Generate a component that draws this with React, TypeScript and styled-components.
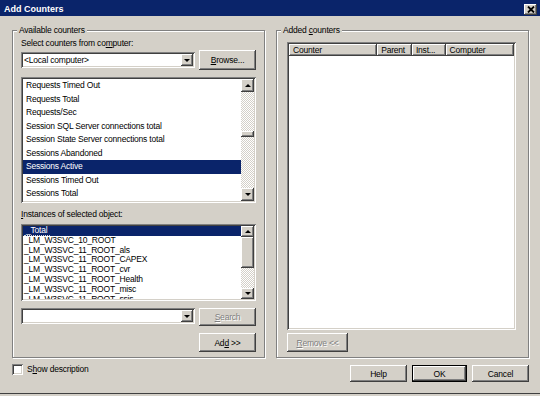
import * as React from 'react';
import styled, { createGlobalStyle, css } from 'styled-components';

const GlobalStyle = createGlobalStyle`
    * { box-sizing: border-box; }
    html, body {
        margin: 0;
        padding: 0;
        background: #d4d0c8;
    }
    body {
        font-family: "Liberation Sans", Arial, sans-serif;
        font-size: 8.5px;
        letter-spacing: -0.2px;
        color: #000;
    }
`;

const raised = css`
    background: #d4d0c8;
    box-shadow: inset -1px -1px 0 #404040, inset 1px 1px 0 #ffffff, inset -2px -2px 0 #808080,
        inset 2px 2px 0 #d4d0c8;
`;

const sunken = css`
    box-shadow: inset 1px 1px 0 #808080, inset -1px -1px 0 #ffffff, inset 2px 2px 0 #404040,
        inset -2px -2px 0 #d4d0c8;
`;

const counters = [
    'Requests Timed Out',
    'Requests Total',
    'Requests/Sec',
    'Session SQL Server connections total',
    'Session State Server connections total',
    'Sessions Abandoned',
    'Sessions Active',
    'Sessions Timed Out',
    'Sessions Total',
];

const instances = [
    '_LM_W3SVC_10_ROOT',
    '_LM_W3SVC_11_ROOT_als',
    '_LM_W3SVC_11_ROOT_CAPEX',
    '_LM_W3SVC_11_ROOT_cvr',
    '_LM_W3SVC_11_ROOT_Health',
    '_LM_W3SVC_11_ROOT_misc',
    '_LM_W3SVC_11_ROOT_ssis',
];

const columns = [
    { name: 'Counter', width: 89 },
    { name: 'Parent', width: 35 },
    { name: 'Inst...', width: 34 },
    { name: 'Computer', width: 69 },
];

const Arrow = ({ dir }: { dir: 'up' | 'down' }) => <Triangle $dir={dir} />;

const ScrollBar = ({ btn, thumbTop, thumbHeight }: { btn: number; thumbTop: number; thumbHeight: number }) => (
    <Scroll>
        <ScrollButton $h={btn}>
            <Arrow dir="up" />
        </ScrollButton>
        <Track>
            <Thumb $top={thumbTop} $h={thumbHeight} />
        </Track>
        <ScrollButton $h={btn}>
            <Arrow dir="down" />
        </ScrollButton>
    </Scroll>
);

const Combo = ({ value }: { value?: string }) => (
    <ComboBox>
        <ComboText>{value}</ComboText>
        <DropButton>
            <Arrow dir="down" />
        </DropButton>
    </ComboBox>
);

export default () => {
    return (
        <>
            <GlobalStyle />
            <Window>
                <TitleBar>
                    <span>Add Counters</span>
                    <CloseButton>
                        <svg width="8" height="7" viewBox="0 0 8 7">
                            <path d="M1 0.5 L7 6.5 M7 0.5 L1 6.5" stroke="#000" strokeWidth="1.8" />
                        </svg>
                    </CloseButton>
                </TitleBar>

                <Body>
                    <Groups>
                        <Group $left={8} $right={8} $top={7}>
                            <Legend>Available counters</Legend>
                            <Label>
                                Select counters from co<U>m</U>puter:
                            </Label>
                            <Row $mt={1} $align="center">
                                <Combo value="<Local computer>" />
                                <Button $w={57} $h={20}>
                                    <span>
                                        <U>B</U>rowse...
                                    </span>
                                </Button>
                            </Row>
                            <ListBox $mt={7} $h={126}>
                                <Items>
                                    {counters.map((c) => (
                                        <CounterRow key={c} $selected={c === 'Sessions Active'}>
                                            {c}
                                        </CounterRow>
                                    ))}
                                </Items>
                                <ScrollBar btn={13} thumbTop={39} thumbHeight={6} />
                            </ListBox>
                            <Label $mt={6}>
                                <U>I</U>nstances of selected object:
                            </Label>
                            <ListBox $mt={4} $h={77}>
                                <Items>
                                    <InstanceRow $selected>
                                        <Focus>_Total</Focus>
                                    </InstanceRow>
                                    {instances.map((i) => (
                                        <InstanceRow key={i}>{i}</InstanceRow>
                                    ))}
                                </Items>
                                <ScrollBar btn={11} thumbTop={0} thumbHeight={31} />
                            </ListBox>
                            <Row $mt={7} $align="flex-start">
                                <Combo />
                                <Button $w={57} $h={18} $disabled>
                                    <span>
                                        <U>S</U>earch
                                    </span>
                                </Button>
                            </Row>
                            <Row $mt={7} $align="flex-start" $end>
                                <Button $w={57} $h={19}>
                                    <span>
                                        Ad<U>d</U> &gt;&gt;
                                    </span>
                                </Button>
                            </Row>
                        </Group>

                        <Group $left={10} $right={12} $top={11}>
                            <Legend>
                                Added <U>c</U>ounters
                            </Legend>
                            <ListView>
                                <Header>
                                    {columns.map((c) => (
                                        <HeaderCell key={c.name} $w={c.width}>
                                            {c.name}
                                        </HeaderCell>
                                    ))}
                                    <HeaderFiller />
                                </Header>
                            </ListView>
                            <Row $mt={3} $align="flex-start">
                                <Button $w={61} $h={19} $disabled>
                                    <span>
                                        <U>R</U>emove &lt;&lt;
                                    </span>
                                </Button>
                            </Row>
                        </Group>
                    </Groups>

                    <Footer>
                        <CheckLabel>
                            <CheckBox />
                            <span>
                                S<U>h</U>ow description
                            </span>
                        </CheckLabel>
                        <FooterButtons>
                            <Button $w={57} $h={17}>
                                Help
                            </Button>
                            <Button $w={55} $h={17} $default>
                                OK
                            </Button>
                            <Button $w={57} $h={17}>
                                Cancel
                            </Button>
                        </FooterButtons>
                    </Footer>
                </Body>
            </Window>
        </>
    );
};

const Window = styled.div`
    width: 540px;
    height: 394px;
    display: flex;
    flex-direction: column;
    border-bottom: 1px solid #404040;
`;

const TitleBar = styled.div`
    height: 16px;
    background: #0a246a;
    color: #fff;
    display: flex;
    justify-content: space-between;
    align-items: center;
    padding: 1px 4px 0 4px;
    font: bold 9px "Liberation Sans", Arial, sans-serif;
    letter-spacing: 0;
`;

const CloseButton = styled.div`
    ${raised};
    width: 13px;
    height: 11px;
    display: flex;
    align-items: center;
    justify-content: center;
    margin-right: -1px;
    align-self: flex-end;
    margin-bottom: 1px;
`;

const Body = styled.div`
    flex: 1;
    display: flex;
    flex-direction: column;
    padding: 14px 11px 0 12px;
`;

const Groups = styled.div`
    display: flex;
    justify-content: space-between;
`;

const Group = styled.div<{ $left: number; $right: number; $top: number }>`
    position: relative;
    width: 253px;
    height: 328px;
    border: 1px solid #808080;
    box-shadow: inset 1px 1px 0 #fff, 1px 1px 0 #fff;
    padding: ${(p) => `${p.$top}px ${p.$right}px 0 ${p.$left}px`};
    display: flex;
    flex-direction: column;
`;

const Legend = styled.div`
    position: absolute;
    top: -6px;
    left: 4px;
    padding: 0 2px;
    line-height: 11px;
    background: #d4d0c8;
`;

const Label = styled.div<{ $mt?: number }>`
    line-height: 11px;
    margin-top: ${(p) => p.$mt ?? 0}px;
`;

const U = styled.span`
    text-decoration: underline;
`;

const Row = styled.div<{ $mt: number; $align: string; $end?: boolean }>`
    display: flex;
    justify-content: ${(p) => (p.$end ? 'flex-end' : 'space-between')};
    align-items: ${(p) => p.$align};
    margin-top: ${(p) => p.$mt}px;
`;

const Button = styled.div<{ $w: number; $h: number; $disabled?: boolean; $default?: boolean }>`
    ${raised};
    width: ${(p) => p.$w}px;
    height: ${(p) => p.$h}px;
    display: flex;
    align-items: center;
    justify-content: center;
    white-space: pre;
    ${(p) =>
        p.$disabled &&
        css`
            color: #808080;
            text-shadow: 1px 1px 0 #fff;
        `}
    ${(p) =>
        p.$default &&
        css`
            border: 1px solid #000;
        `}
`;

const ComboBox = styled.div`
    ${sunken};
    width: 174px;
    height: 16px;
    background: #fff;
    display: flex;
    align-items: center;
    justify-content: space-between;
    padding: 2px;
`;

const ComboText = styled.span`
    padding-left: 1px;
    white-space: nowrap;
`;

const DropButton = styled.div`
    ${raised};
    width: 12px;
    height: 12px;
    display: flex;
    align-items: center;
    justify-content: center;
`;

const Triangle = styled.div<{ $dir: 'up' | 'down' }>`
    width: 0;
    height: 0;
    border-left: 3px solid transparent;
    border-right: 3px solid transparent;
    ${(p) =>
        p.$dir === 'up'
            ? css`
                  border-bottom: 3px solid #000;
              `
            : css`
                  border-top: 3px solid #000;
              `}
`;

const ListBox = styled.div<{ $mt: number; $h: number }>`
    ${sunken};
    background: #fff;
    height: ${(p) => p.$h}px;
    margin-top: ${(p) => p.$mt}px;
    padding: 2px;
    display: flex;
`;

const Items = styled.div`
    flex: 1;
    overflow: hidden;
`;

const CounterRow = styled.div<{ $selected?: boolean }>`
    height: 13.5px;
    line-height: 13.5px;
    padding-left: 3px;
    white-space: nowrap;
    ${(p) =>
        p.$selected &&
        css`
            background: #0a246a;
            color: #fff;
        `}
`;

const InstanceRow = styled.div<{ $selected?: boolean }>`
    height: 9.8px;
    line-height: 9.8px;
    padding-left: 1px;
    white-space: nowrap;
    ${(p) =>
        p.$selected &&
        css`
            background: #0a246a;
            color: #fff;
        `}
`;

const Focus = styled.span`
    display: inline-block;
    height: 9.8px;
    padding: 0 3px 0 2px;
    border-bottom: 1px dotted #d8d8d8;
`;

const Scroll = styled.div`
    width: 13px;
    display: flex;
    flex-direction: column;
`;

const ScrollButton = styled.div<{ $h: number }>`
    ${raised};
    height: ${(p) => p.$h}px;
    display: flex;
    align-items: center;
    justify-content: center;
`;

const Track = styled.div`
    flex: 1;
    background-color: #fff;
    background-image: repeating-conic-gradient(#d4d0c8 0 25%, #fff 0 50%);
    background-size: 2px 2px;
`;

const Thumb = styled.div<{ $top: number; $h: number }>`
    ${raised};
    margin-top: ${(p) => p.$top}px;
    height: ${(p) => p.$h}px;
`;

const ListView = styled.div`
    ${sunken};
    background: #fff;
    height: 288px;
    padding: 2px;
`;

const Header = styled.div`
    display: flex;
    height: 12px;
`;

const HeaderCell = styled.div<{ $w: number }>`
    ${raised};
    width: ${(p) => p.$w}px;
    line-height: 12px;
    padding-left: 4px;
    white-space: nowrap;
    overflow: hidden;
`;

const HeaderFiller = styled.div`
    ${raised};
    flex: 1;
`;

const Footer = styled.div`
    display: flex;
    justify-content: space-between;
    align-items: flex-start;
    margin-top: 7px;
`;

const CheckLabel = styled.div`
    display: flex;
    align-items: center;
    gap: 4px;
    margin-top: -1px;
    line-height: 11px;
`;

const CheckBox = styled.div`
    ${sunken};
    width: 11px;
    height: 11px;
    background: #fff;
`;

const FooterButtons = styled.div`
    display: flex;
    gap: 5px;
`;
